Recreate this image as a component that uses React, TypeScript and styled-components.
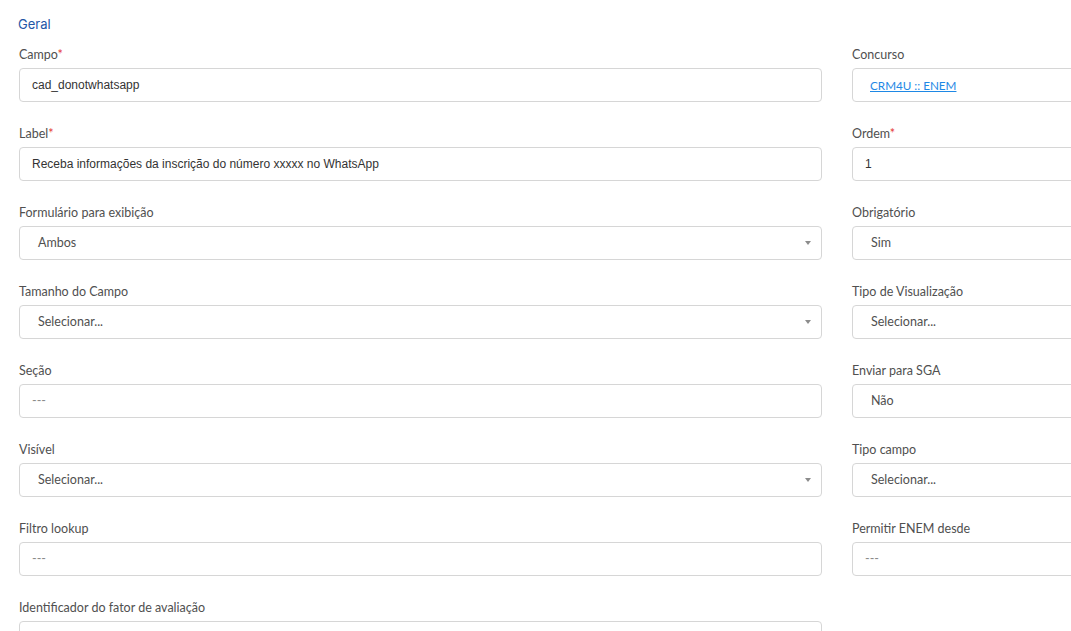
import React from "react";
import styled, { createGlobalStyle } from "styled-components";

const GlobalStyle = createGlobalStyle`
  html, body {
    margin: 0;
    padding: 0;
    background: #ffffff;
    overflow: hidden;
  }
  body {
    font-family: Lato, "Noto Sans", sans-serif;
  }
`;

const Page = styled.div`
  width: 1200px;
  padding: 16px 0 0 18px;
  box-sizing: border-box;
`;

const SectionTitle = styled.div`
  font-family: Inter, "Noto Sans", sans-serif;
  font-size: 13px;
  line-height: 16px;
  color: #2356a6;
  margin-bottom: 14px;
`;

const FormGrid = styled.div`
  display: grid;
  grid-template-columns: 803px 300px;
  column-gap: 30px;
  row-gap: 23px;
  padding-left: 1px;
`;

const Field = styled.div`
  display: flex;
  flex-direction: column;
`;

const Label = styled.label`
  font-family: Lato, "Noto Sans", sans-serif;
  font-size: 12.5px;
  line-height: 17px;
  color: #505050;
  margin-bottom: 5px;
`;

const Required = styled.span`
  color: #e53935;
`;

const Control = styled.div<{ $pad?: number }>`
  position: relative;
  height: 34px;
  box-sizing: border-box;
  border: 1px solid #d6d6d6;
  border-radius: 4px;
  display: flex;
  align-items: center;
  padding: 0 30px 1px ${(p) => p.$pad ?? 12}px;
  background: #ffffff;
`;

const InputText = styled.span`
  font-family: "Liberation Sans", Arial, sans-serif;
  font-size: 12px;
  color: #333333;
`;

const OptionText = styled.span<{ $muted?: boolean }>`
  font-family: Lato, "Noto Sans", sans-serif;
  font-size: 12.5px;
  color: ${(p) => (p.$muted ? "#8a8a8a" : "#505050")};
`;

const LinkText = styled.a`
  font-family: Lato, "Noto Sans", sans-serif;
  font-size: 11.7px;
  color: #1e88e5;
  text-decoration: underline;
`;

const Caret = styled.span`
  position: absolute;
  right: 10px;
  top: 50%;
  margin-top: -2px;
  width: 0;
  height: 0;
  border-left: 3.5px solid transparent;
  border-right: 3.5px solid transparent;
  border-top: 4px solid #8c8c8c;
`;

const Empty = styled.div``;

type Kind = "input" | "option" | "placeholder" | "link";

const Value: React.FC<{ kind: Kind; text: string }> = ({ kind, text }) => {
  if (kind === "input") return <InputText>{text}</InputText>;
  if (kind === "link") return <LinkText>{text}</LinkText>;
  return <OptionText $muted={kind === "placeholder"}>{text}</OptionText>;
};

interface FieldDef {
  label: string;
  required?: boolean;
  kind: Kind;
  value: string;
  pad?: number;
  caret?: boolean;
}

const FormField: React.FC<{ f: FieldDef }> = ({ f }) => (
  <Field>
    <Label>
      {f.label}
      {f.required && <Required>*</Required>}
    </Label>
    <Control $pad={f.pad}>
      <Value kind={f.kind} text={f.value} />
      {f.caret && <Caret />}
    </Control>
  </Field>
);

const rows: [FieldDef, FieldDef | null][] = [
  [
    { label: "Campo", required: true, kind: "input", value: "cad_donotwhatsapp" },
    { label: "Concurso", kind: "link", value: "CRM4U :: ENEM", pad: 17 },
  ],
  [
    {
      label: "Label",
      required: true,
      kind: "input",
      value: "Receba informações da inscrição do número xxxxx no WhatsApp",
    },
    { label: "Ordem", required: true, kind: "input", value: "1" },
  ],
  [
    { label: "Formulário para exibição", kind: "option", value: "Ambos", pad: 18, caret: true },
    { label: "Obrigatório", kind: "option", value: "Sim", pad: 18 },
  ],
  [
    { label: "Tamanho do Campo", kind: "option", value: "Selecionar...", pad: 18, caret: true },
    { label: "Tipo de Visualização", kind: "option", value: "Selecionar...", pad: 18 },
  ],
  [
    { label: "Seção", kind: "placeholder", value: "---" },
    { label: "Enviar para SGA", kind: "option", value: "Não", pad: 18 },
  ],
  [
    { label: "Visível", kind: "option", value: "Selecionar...", pad: 18, caret: true },
    { label: "Tipo campo", kind: "option", value: "Selecionar...", pad: 18 },
  ],
  [
    { label: "Filtro lookup", kind: "placeholder", value: "---" },
    { label: "Permitir ENEM desde", kind: "placeholder", value: "---" },
  ],
  [{ label: "Identificador do fator de avaliação", kind: "input", value: "" }, null],
];

const App: React.FC = () => {
  return (
    <>
      <GlobalStyle />
      <Page>
        <SectionTitle>Geral</SectionTitle>
        <FormGrid>
          {rows.map(([left, right], i) => (
            <React.Fragment key={i}>
              <FormField f={left} />
              {right ? <FormField f={right} /> : <Empty />}
            </React.Fragment>
          ))}
        </FormGrid>
      </Page>
    </>
  );
};

export default App;
